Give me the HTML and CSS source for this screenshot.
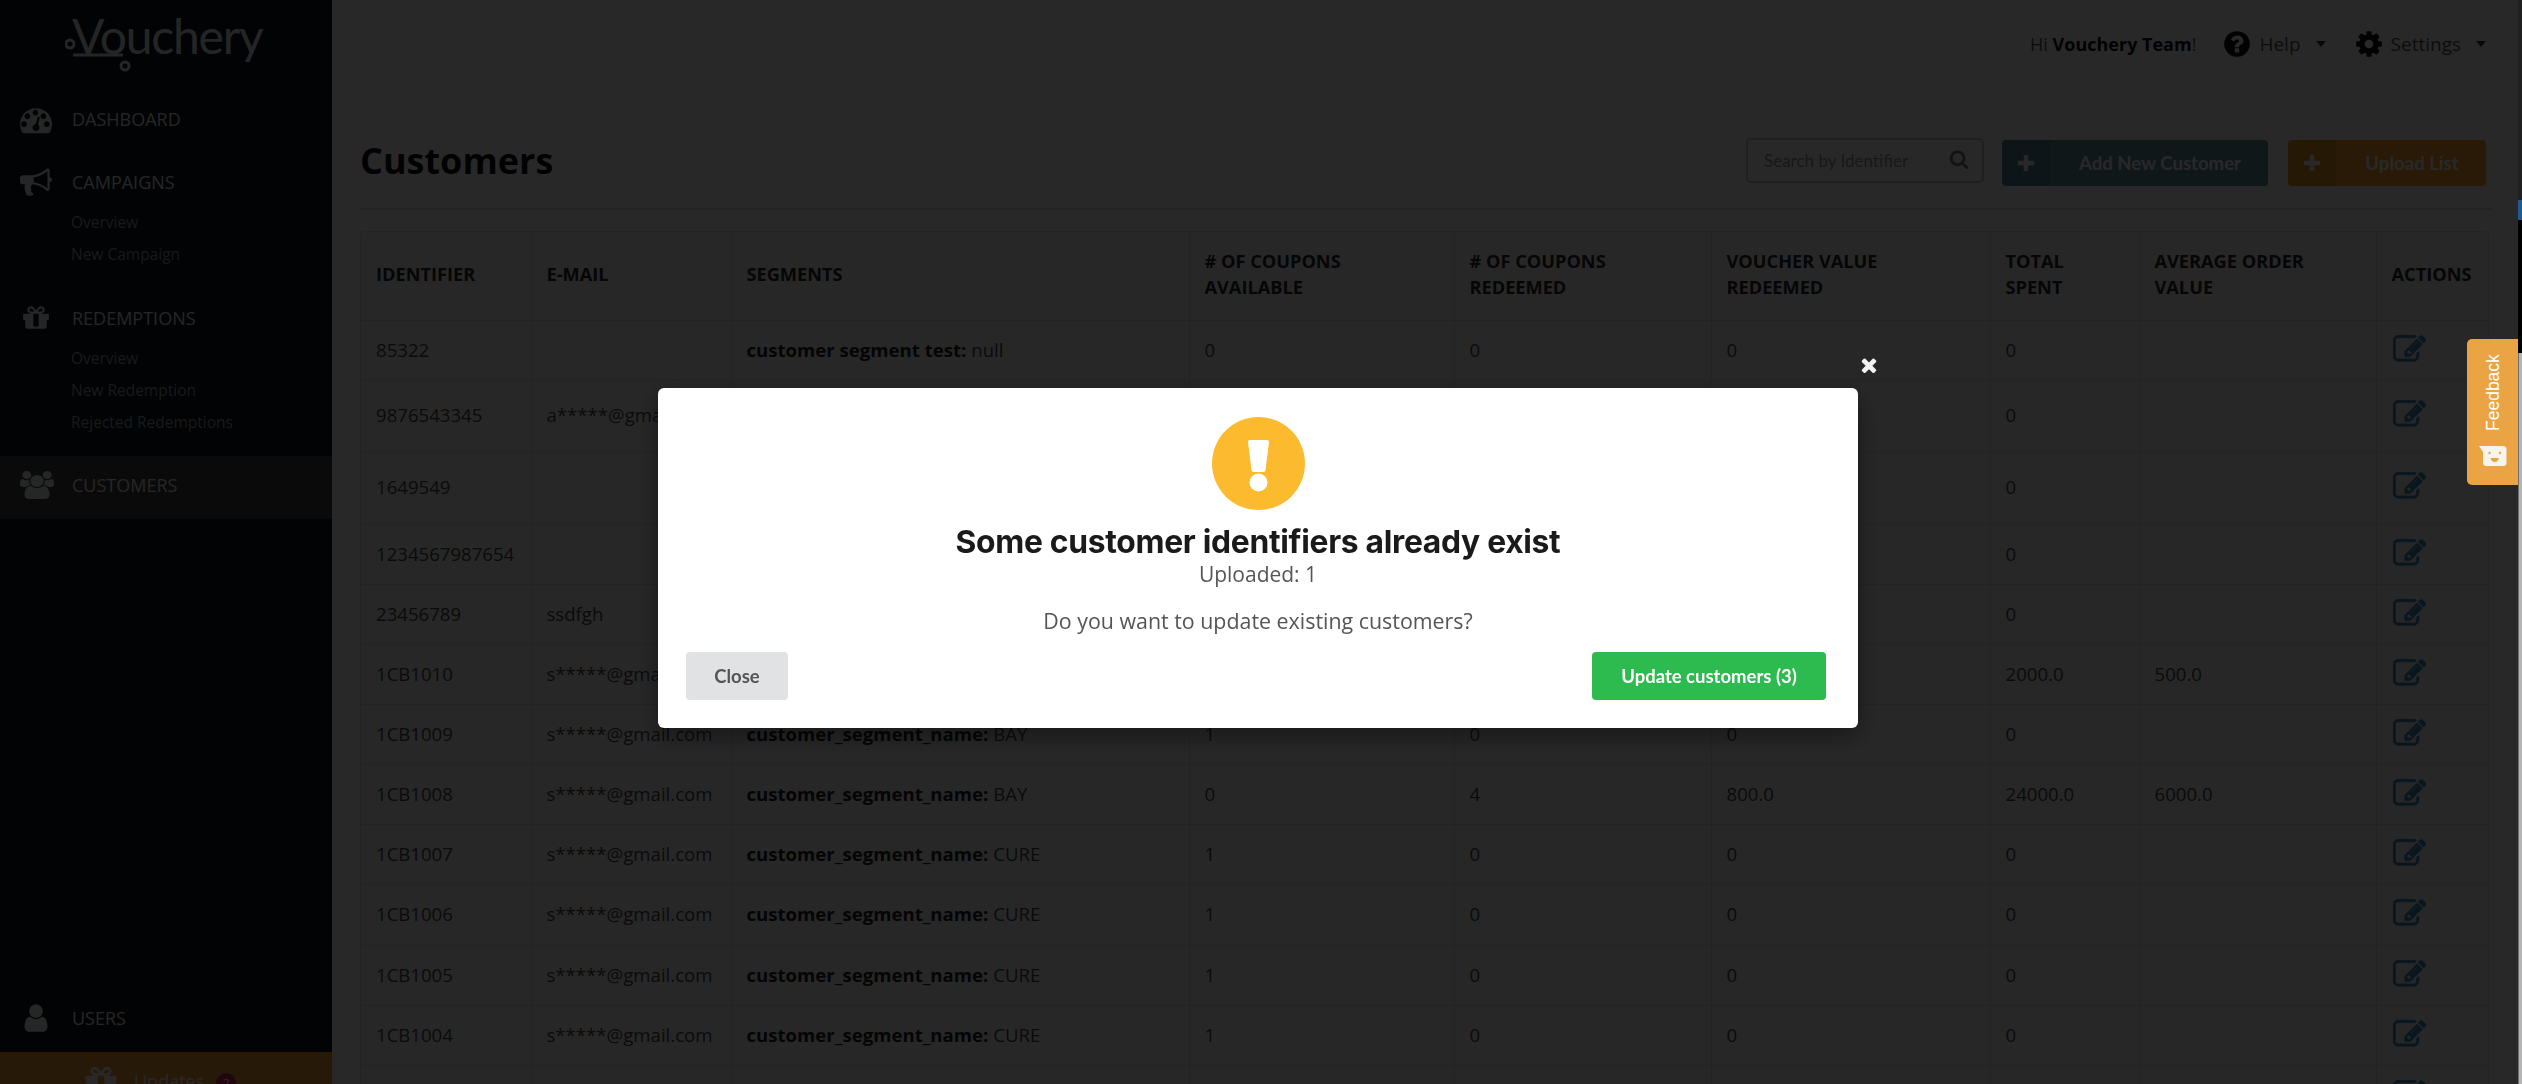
FILE: index.html
```html
<!DOCTYPE html>
<html lang="en">
<head>
<meta charset="utf-8">
<title>Customers - Vouchery</title>
<link rel="stylesheet" href="styles.css">
</head>
<body>
<svg class="sprites" width="0" height="0" aria-hidden="true">
  <symbol id="i-edit" viewBox="0 0 1792 1792"><path d="M888 1184l116-116-152-152-116 116v56h96v96h56zm440-720q-16-16-33 1l-350 350q-17 17-1 33t33-1l350-350q17-17 1-33zm80 594v190q0 119-84.5 203.5t-203.5 84.5h-832q-119 0-203.5-84.5t-84.5-203.5v-832q0-119 84.5-203.5t203.5-84.5h832q63 0 117 25 15 7 18 23 3 17-9 29l-49 49q-14 14-32 8-23-6-45-6h-832q-66 0-113 47t-47 113v832q0 66 47 113t113 47h832q66 0 113-47t47-113v-126q0-13 9-22l64-64q15-15 35-7t20 29zm-96-738l288 288-672 672h-288v-288zm444 132l-92 92-288-288 92-92q28-28 68-28t68 28l152 152q28 28 28 68t-28 68z"/></symbol>
  <symbol id="i-gift" viewBox="0 0 1792 1792"><path d="M1056 1356v-716h-320v716q0 25 18 38.5t46 13.5h192q28 0 46-13.5t18-38.5zm-456-844h195l-126-161q-26-31-69-31-40 0-68 28t-28 68 28 68 68 28zm688-96q0-40-28-68t-68-28q-43 0-69 31l-125 161h194q40 0 68-28t28-68zm376 256v320q0 14-9 23t-23 9h-96v416q0 40-28 68t-68 28h-1088q-40 0-68-28t-28-68v-416h-96q-14 0-23-9t-9-23v-320q0-14 9-23t23-9h440q-93 0-158.5-65.5t-65.5-158.5 65.5-158.5 158.5-65.5q107 0 168 77l128 165 128-165q61-77 168-77 93 0 158.5 65.5t65.5 158.5-65.5 158.5-158.5 65.5h440q14 0 23 9t9 23z"/></symbol>
  <symbol id="i-plus" viewBox="0 0 20 20"><path d="M7.5 1h5v6.500H19v5h-6.500V19h-5v-6.500H1v-5h6.500z"/></symbol>
</svg>

<div class="app">
  <aside class="sidebar">
    <div class="logo">
      <svg class="logo-mark" viewBox="0 0 70 39" aria-hidden="true">
        <circle cx="5" cy="11" r="4"/>
        <path d="M8 22h50"/>
        <circle cx="60" cy="33" r="4"/>
      </svg>
      <span class="logo-text">Vouchery</span>
    </div>
    <nav class="nav">
      <section class="nav-group nav-dash">
        <a class="nav-head"><svg class="nav-icon" viewBox="0 0 1792 1792"><path d="M384 1184q0-66-47-113t-113-47-113 47-47 113 47 113 113 47 113-47 47-113zm192-448q0-66-47-113t-113-47-113 47-47 113 47 113 113 47 113-47 47-113zm428 481l101-382q6-26-7.5-48.5t-38.5-29.5-48 6.5-30 39.5l-101 382q-60 5-107 43.5t-63 98.5q-20 77 20 146t117 89 146-20 89-117q16-60-6-117t-72-91zm660-33q0-66-47-113t-113-47-113 47-47 113 47 113 113 47 113-47 47-113zm-640-640q0-66-47-113t-113-47-113 47-47 113 47 113 113 47 113-47 47-113zm448 192q0-66-47-113t-113-47-113 47-47 113 47 113 113 47 113-47 47-113zm320 448q0 261-141 483-19 29-54 29h-1402q-35 0-54-29-141-221-141-483 0-182 71-348t191-286 286-191 348-71 348 71 286 191 191 286 71 348z"/></svg><span>DASHBOARD</span></a>
      </section>
      <section class="nav-group nav-camp">
        <a class="nav-head"><svg class="nav-icon" viewBox="0 0 1792 1792"><path d="M1664 640q53 0 90.500 37.500t37.500 90.500-37.500 90.500-90.500 37.500v384q0 52-38 90t-90 38q-417-347-812-380-58 19-91 66t-31 100.500 40 92.500q-20 33-23 65.500t6 58 33.500 55 48 50 61.500 50.500q-29 58-111.500 83t-168.500 11.500-132-55.500q-7-23-29.500-87.500t-32-94.500-23-89-15-101 3.500-98.500 22-110.500h-122q-66 0-113-47t-47-113v-192q0-66 47-113t113-47h480q435 0 896-384 52 0 90 38t38 90v384zm-128 604v-954q-394 302-768 343v270q377 42 768 341z"/></svg><span>CAMPAIGNS</span></a>
        <a class="nav-sub">Overview</a>
        <a class="nav-sub">New Campaign</a>
      </section>
      <section class="nav-group nav-red">
        <a class="nav-head"><svg class="nav-icon nav-icon-gift"><use href="#i-gift"/></svg><span>REDEMPTIONS</span></a>
        <a class="nav-sub">Overview</a>
        <a class="nav-sub">New Redemption</a>
        <a class="nav-sub">Rejected Redemptions</a>
      </section>
      <section class="nav-group nav-cust">
        <a class="nav-head"><svg class="nav-icon nav-icon-wide" viewBox="0 0 1920 1792" preserveAspectRatio="none"><path d="M593 896q-162 5-265 128h-134q-82 0-138-40.500t-56-118.500q0-353 124-353 6 0 43.500 21t97.500 42.500 119 21.500q67 0 133-23-5 37-5 66 0 139 81 256zm1071 637q0 120-73 189.500t-194 69.500h-874q-121 0-194-69.500t-73-189.500q0-53 3.500-103.500t14-109 26.500-108.500 43-97.500 62-81 85.500-53.500 111.500-20q10 0 43 21.500t73 48 107 48 135 21.500 135-21.500 107-48 73-48 43-21.500q61 0 111.500 20t85.500 53.500 62 81 43 97.500 26.500 108.500 14 109 3.500 103.500zm-1024-1277q0 106-75 181t-181 75-181-75-75-181 75-181 181-75 181 75 75 181zm704 384q0 159-112.500 271.500t-271.500 112.500-271.500-112.500-112.500-271.500 112.500-271.500 271.500-112.500 271.500 112.500 112.500 271.500zm576 225q0 78-56 118.500t-138 40.500h-134q-103-123-265-128 81-117 81-256 0-29-5-66 66 23 133 23 59 0 119-21.500t97.500-42.500 43.500-21q124 0 124 353zm-128-609q0 106-75 181t-181 75-181-75-75-181 75-181 181-75 181 75 75 181z"/></svg><span>CUSTOMERS</span></a>
      </section>
    </nav>
    <div class="side-foot">
      <a class="nav-head nav-users"><svg class="nav-icon" viewBox="0 0 1792 1792"><path d="M1536 1399q0 109-62.500 187t-150.500 78h-854q-88 0-150.500-78t-62.500-187q0-85 8.500-160.500t31.500-152 58.500-131 94-89 134.500-34.500q131 128 313 128t313-128q76 0 134.500 34.500t94 89 58.500 131 31.500 152 8.500 160.500zm-256-887q0 159-112.500 271.500t-271.500 112.500-271.500-112.500-112.500-271.500 112.500-271.500 271.500-112.500 271.500 112.500 112.500 271.500z"/></svg><span>USERS</span></a>
      <a class="updates"><svg class="updates-icon"><use href="#i-gift"/></svg><span>Updates</span><b class="updates-badge">2</b></a>
    </div>
  </aside>

  <main class="main">
    <header class="topbar">
      <span class="greet">Hi <b>Vouchery Team</b>!</span>
      <a class="top-link"><svg class="top-icon" viewBox="0 0 1792 1792"><path d="M1024 1376v-192q0-14-9-23t-23-9h-192q-14 0-23 9t-9 23v192q0 14 9 23t23 9h192q14 0 23-9t9-23zm256-672q0-88-55.500-163t-138.500-116-170-41q-243 0-371 213-15 24 8 42l132 100q7 6 19 6 16 0 25-12 53-68 86-92 34-24 86-24 48 0 85.500 26t37.500 59q0 38-20 61t-68 45q-63 28-115.500 86.500t-52.500 125.500v36q0 14 9 23t23 9h192q14 0 23-9t9-23q0-19 21.500-49.500t54.500-49.500q32-18 49-28.500t46-35 44.500-48 28-60.500 12.500-81zm384 192q0 209-103 385.500t-279.500 279.500-385.500 103-385.500-103-279.500-279.500-103-385.500 103-385.500 279.500-279.500 385.500-103 385.500 103 279.500 279.500 103 385.500z"/></svg><span>Help</span><i class="caret"></i></a>
      <a class="top-link"><svg class="top-icon" viewBox="0 0 1792 1792"><path d="M1152 896q0-106-75-181t-181-75-181 75-75 181 75 181 181 75 181-75 75-181zm512-109v222q0 12-8 23t-20 13l-185 28q-19 54-39 91 35 50 107 138 10 12 10 25t-9 23q-27 37-99 108t-94 71q-12 0-26-9l-138-108q-44 23-91 38-16 136-29 186-7 28-36 28h-222q-14 0-24.500-8.500t-11.500-21.500l-28-184q-49-16-90-37l-141 107q-10 9-25 9-14 0-25-11-126-114-165-168-7-10-7-23 0-12 8-23 15-21 51-66.500t54-70.500q-27-50-41-99l-183-27q-13-2-21-12.500t-8-23.500v-222q0-12 8-23t19-13l186-28q14-46 39-92-40-57-107-138-10-12-10-24 0-10 9-23 26-36 98.500-107.500t94.500-71.500q13 0 26 10l138 107q44-23 91-38 16-136 29-186 7-28 36-28h222q14 0 24.500 8.500t11.500 21.500l28 184q49 16 90 37l142-107q9-9 24-9 13 0 25 10 129 119 165 170 7 8 7 22 0 12-8 23-15 21-51 66.500t-54 70.500q26 50 41 98l183 28q13 2 21 12.500t8 23.500z"/></svg><span>Settings</span><i class="caret"></i></a>
    </header>

    <div class="page-head">
      <h1>Customers</h1>
      <div class="tools">
        <label class="search"><span>Search by Identifier</span><svg class="search-icon" viewBox="0 0 1792 1792"><path d="M1216 832q0-185-131.500-316.500t-316.500-131.500-316.500 131.500-131.500 316.500 131.500 316.500 316.500 131.500 316.500-131.500 131.500-316.500zm512 832q0 52-38 90t-90 38q-54 0-90-38l-343-342q-179 124-399 124-143 0-273.500-55.500t-225-150-150-225-55.500-273.500 55.500-273.500 150-225 225-150 273.500-55.500 273.500 55.500 225 150 150 225 55.500 273.500q0 220-124 399l343 343q37 37 37 90z"/></svg></label>
        <a class="act act-add"><i class="act-plus"><svg><use href="#i-plus"/></svg></i><span>Add New Customer</span></a>
        <a class="act act-up"><i class="act-plus"><svg><use href="#i-plus"/></svg></i><span>Upload List</span></a>
      </div>
    </div>

    <div class="table-wrap">
      <table class="grid">
        <colgroup>
          <col class="c1"><col class="c2"><col class="c3"><col class="c4"><col class="c5"><col class="c6"><col class="c7"><col class="c8"><col class="c9">
        </colgroup>
        <thead>
          <tr class="r-head"><th>IDENTIFIER</th><th>E-MAIL</th><th>SEGMENTS</th><th># OF COUPONS<br>AVAILABLE</th><th># OF COUPONS<br>REDEEMED</th><th>VOUCHER VALUE<br>REDEEMED</th><th>TOTAL<br>SPENT</th><th>AVERAGE ORDER<br>VALUE</th><th>ACTIONS</th></tr>
        </thead>
        <tbody>
          <tr class="r60"><td>85322</td><td></td><td><b>customer segment test:</b> null</td><td>0</td><td>0</td><td>0</td><td>0</td><td></td><td><svg class="edit"><use href="#i-edit"/></svg></td></tr>
          <tr class="r71"><td>9876543345</td><td>a*****@gmail.com</td><td></td><td>0</td><td>0</td><td>0</td><td>0</td><td></td><td><svg class="edit"><use href="#i-edit"/></svg></td></tr>
          <tr class="r73"><td>1649549</td><td></td><td></td><td>0</td><td>0</td><td>0</td><td>0</td><td></td><td><svg class="edit"><use href="#i-edit"/></svg></td></tr>
          <tr class="r60"><td>1234567987654</td><td></td><td></td><td>0</td><td>0</td><td>0</td><td>0</td><td></td><td><svg class="edit"><use href="#i-edit"/></svg></td></tr>
          <tr class="r60"><td>23456789</td><td>ssdfgh</td><td></td><td>0</td><td>0</td><td>0</td><td>0</td><td></td><td><svg class="edit"><use href="#i-edit"/></svg></td></tr>
          <tr class="r60"><td>1CB1010</td><td>s*****@gmail.com</td><td></td><td>0</td><td>0</td><td>0</td><td>2000.0</td><td>500.0</td><td><svg class="edit"><use href="#i-edit"/></svg></td></tr>
          <tr class="r60"><td>1CB1009</td><td>s*****@gmail.com</td><td><b>customer_segment_name:</b> BAY</td><td>1</td><td>0</td><td>0</td><td>0</td><td></td><td><svg class="edit"><use href="#i-edit"/></svg></td></tr>
          <tr class="r60"><td>1CB1008</td><td>s*****@gmail.com</td><td><b>customer_segment_name:</b> BAY</td><td>0</td><td>4</td><td>800.0</td><td>24000.0</td><td>6000.0</td><td><svg class="edit"><use href="#i-edit"/></svg></td></tr>
          <tr class="r60"><td>1CB1007</td><td>s*****@gmail.com</td><td><b>customer_segment_name:</b> CURE</td><td>1</td><td>0</td><td>0</td><td>0</td><td></td><td><svg class="edit"><use href="#i-edit"/></svg></td></tr>
          <tr class="r61"><td>1CB1006</td><td>s*****@gmail.com</td><td><b>customer_segment_name:</b> CURE</td><td>1</td><td>0</td><td>0</td><td>0</td><td></td><td><svg class="edit"><use href="#i-edit"/></svg></td></tr>
          <tr class="r60"><td>1CB1005</td><td>s*****@gmail.com</td><td><b>customer_segment_name:</b> CURE</td><td>1</td><td>0</td><td>0</td><td>0</td><td></td><td><svg class="edit"><use href="#i-edit"/></svg></td></tr>
          <tr class="r60"><td>1CB1004</td><td>s*****@gmail.com</td><td><b>customer_segment_name:</b> CURE</td><td>1</td><td>0</td><td>0</td><td>0</td><td></td><td><svg class="edit"><use href="#i-edit"/></svg></td></tr>
          <tr class="r60"><td></td><td></td><td></td><td></td><td></td><td></td><td></td><td></td><td><svg class="edit"><use href="#i-edit"/></svg></td></tr>
        </tbody>
      </table>
    </div>
  </main>
  <div class="scroll-strip"><i class="strip-top"></i><i class="strip-blue"></i><i class="strip-black"></i><i class="strip-grey"></i></div>
</div>

<div class="overlay"></div>

<a class="feedback">
  <span class="feedback-label">Feedback</span>
  <svg class="feedback-face" viewBox="0 0 28 20" aria-hidden="true">
    <path class="bubble" d="M0 0h24q3.500 0 3.500 3.500v13q0 3.500-3.500 3.500H7.500Q4 20 4 16.500V6z"/>
    <circle class="eye" cx="10.500" cy="7" r="1.200"/>
    <circle class="eye" cx="21" cy="7" r="1.200"/>
    <path class="eye" d="M11.500 12h8.500q-1 4-4.250 4t-4.250-4z"/>
  </svg>
</a>

<div class="modal-close"><svg viewBox="0 0 1792 1792"><path d="M1490 1322q0 40-28 68l-136 136q-28 28-68 28t-68-28l-294-294-294 294q-28 28-68 28t-68-28l-136-136q-28-28-28-68t28-68l294-294-294-294q-28-28-28-68t28-68l136-136q28-28 68-28t68 28l294 294 294-294q28-28 68-28t68 28l136 136q28 28 28 68t-28 68l-294 294 294 294q28 28 28 68z"/></svg></div>

<div class="modal" role="dialog">
  <div class="warn"><svg viewBox="0 0 93 93" aria-hidden="true"><path d="M38 23h17q2 0 2 2l-3.500 28q-.3 2-2 2h-10q-1.700 0-2-2L36 25q0-2 2-2z"/><circle cx="46.500" cy="65.500" r="9"/></svg></div>
  <h2>Some customer identifiers already exist</h2>
  <p class="uploaded">Uploaded: 1</p>
  <p class="question">Do you want to update existing customers?</p>
  <div class="modal-actions">
    <button class="btn btn-close">Close</button>
    <button class="btn btn-update">Update customers (3)</button>
  </div>
</div>
</body>
</html>
```

FILE: styles.css
```css
* { box-sizing: border-box; }
html, body { margin: 0; height: 100%; overflow: hidden; }
body { font-family: "Open Sans", "Liberation Sans", sans-serif; background: #fff; color: #4a4a4a; }
.sprites { position: absolute; }

.app { display: flex; width: 2522px; height: 1084px; }

/* sidebar */
.sidebar { width: 332px; flex: none; height: 1084px; background: #0d1419; display: flex; flex-direction: column; }
.logo { height: 87px; position: relative; padding: 8px 0 0 72px; }
.logo-text { font-family: Lato, sans-serif; font-weight: 400; font-size: 48px; line-height: 56px; letter-spacing: -1.200px; color: #e4e8e8; }
.logo-mark { position: absolute; left: 65px; top: 33px; width: 70px; height: 39px; fill: none; stroke: #e4e8e8; stroke-width: 3; }
.nav { flex: 1; display: flex; flex-direction: column; }
.nav-group { border-bottom: 1px solid #121a1f; }
.nav-dash { height: 66px; padding-top: 14px; }
.nav-camp { height: 136px; padding-top: 11px; }
.nav-red { height: 167px; padding-top: 11px; }
.nav-cust { height: 63px; padding-top: 11px; background: #444; border-bottom: 0; }
.nav-head { display: flex; align-items: center; height: 36px; padding-left: 20px; font-size: 18px; color: #e8eeee; }
.nav-icon { width: 32px; height: 32px; fill: #e8f2f2; flex: none; margin-right: 20px; }
.nav-icon-gift { width: 30px; height: 30px; margin: 0 21px 0 1px; }
.nav-icon-wide { width: 34px; height: 28px; margin-right: 18px; }
.nav-sub { display: block; height: 32px; line-height: 32px; padding-left: 71px; font-size: 15.500px; color: #9aa0a3; }
.nav-head + .nav-sub { margin-top: 6px; }
.side-foot { display: flex; flex-direction: column; }
.nav-users { height: 33px; margin-bottom: 18px; }
.updates { height: 32px; background: #f39f2e; color: #fff; display: flex; align-items: flex-start; padding: 17px 0 0 83px; font-size: 18px; overflow: hidden; }
.updates-icon { width: 36px; height: 36px; fill: #fff; margin: -6px 15px 0 0; flex: none; }
.updates-badge { width: 20px; height: 20px; border-radius: 50%; background: #d02060; font-weight: 400; font-size: 13px; text-align: center; line-height: 20px; margin-left: 12px; margin-top: 4px; }

/* main */
.main { flex: 1; min-width: 0; padding: 0 29px 0 28px; }
.topbar { height: 88px; display: flex; align-items: center; justify-content: flex-end; font-size: 18px; color: #555; padding-right: 7px; }
.greet { margin-right: 26px; color: #555; }
.greet b { color: #111; }
.top-link { display: flex; align-items: center; font-size: 19px; }
.top-link + .top-link { margin-left: 28px; }
.top-icon { width: 30px; height: 30px; fill: #111; margin-right: 7px; }
.caret { width: 0; height: 0; border: 5px solid transparent; border-top: 6px solid #333; border-bottom: 0; margin-left: 15px; }

.page-head { height: 122px; display: flex; justify-content: space-between; padding-top: 50px; border-bottom: 2px solid #ddd; margin-bottom: 21px; }
h1 { margin: 0; font-size: 36px; line-height: 46px; font-weight: 700; color: #111; }
.tools { display: flex; align-items: flex-start; margin-right: 7px; }
.search { width: 238px; height: 45px; border: 2px solid #c4c4c4; border-radius: 5px; display: flex; align-items: center; justify-content: space-between; padding: 0 13px 0 16px; font-size: 17px; color: #999; font-family: Lato, sans-serif; }
.search-icon { width: 20px; height: 20px; fill: #777; margin-top: -4px; }
.act { height: 46px; margin: 2px 0 0 18px; border-radius: 4px; display: flex; color: #fff; font-size: 18.600px; font-weight: 700; overflow: hidden; font-family: Lato, sans-serif; }
.act-add { width: 266px; background: #5e93a2; margin-left: 18px; }
.act-up { width: 198px; background: #ffa726; margin-left: 20px; }
.act span { flex: 1; display: flex; align-items: center; justify-content: center; padding-left: 2px; }
.act-plus { width: 48px; height: 46px; display: flex; align-items: center; justify-content: center; background: rgba(0,0,0,.07); }
.act-plus svg { width: 18px; height: 18px; fill: #fff; }

.table-wrap { width: 2129px; border: 1px solid #dedede; border-radius: 4px 4px 0 0; }
.grid { border-collapse: collapse; table-layout: fixed; width: 2127px; background: #f7f7f7; font-size: 18.600px; }
.c1 { width: 170px; } .c2 { width: 200px; } .c3 { width: 458px; } .c4 { width: 265px; } .c5 { width: 257px; } .c6 { width: 279px; } .c7 { width: 149px; } .c8 { width: 237px; } .c9 { width: 112px; }
.grid th, .grid td { border: 1px solid #e0e0e0; padding: 0 0 2px 15px; text-align: left; vertical-align: middle; white-space: nowrap; }
.grid tr > :first-child { border-left: 0; }
.grid tr > :last-child { border-right: 0; }
.grid thead tr:first-child th { border-top: 0; }
.grid th { font-weight: 700; font-size: 18.200px; line-height: 26px; color: #2a2a2a; padding-bottom: 4px; }
.grid td { color: #4a4a4a; }
.grid td b { color: #222; }
.r-head { height: 88px; }
.r60 { height: 60px; } .r61 { height: 61px; } .r71 { height: 71px; } .r73 { height: 73px; }
.edit { width: 33px; height: 33px; fill: #3a8cc0; stroke: #3a8cc0; stroke-width: 36; display: block; margin-left: 1px; }

.scroll-strip { position: fixed; right: 0; top: 0; width: 4px; height: 1084px; z-index: 20; display: flex; flex-direction: column; }
.strip-top { height: 200px; background: #202020; }
.strip-blue { height: 20px; background: #1d5a96; }
.strip-black { height: 133px; background: #000; }
.strip-grey { flex: 1; background: #b5b5b5; border-left: 1px solid #6e6e6e; }

/* overlay, modal */
.overlay { position: fixed; inset: 0; background: rgba(0,0,0,.843); z-index: 10; }
.modal { position: fixed; left: 658px; top: 388px; width: 1200px; height: 340px; background: #fff; border-radius: 6px; z-index: 12; box-shadow: 0 8px 24px rgba(0,0,0,.4); text-align: center; padding-top: 29px; }
.warn { width: 93px; height: 93px; border-radius: 50%; background: #fcbb2f; margin: 0 auto; }
.warn svg { width: 93px; height: 93px; fill: #fff; display: block; }
.modal h2 { margin: 12px 0 0; font-family: Inter, Lato, sans-serif; font-size: 31.800px; line-height: 40px; font-weight: 700; letter-spacing: -.3px; color: #1a1a1a; }
.uploaded { margin: -2px 0 0; font-size: 21px; line-height: 28px; color: #555; }
.question { margin: 19px 0 0; font-size: 21.400px; line-height: 28px; color: #555; }
.modal-actions { display: flex; justify-content: space-between; margin: 17px 32px 0 28px; }
.btn { height: 48px; border: 0; border-radius: 4px; font-family: Lato, sans-serif; font-weight: 700; font-size: 18.500px; padding: 0; }
.btn-close { width: 102px; background: #e1e2e4; color: #555; }
.btn-update { width: 234px; background: #2dba4e; color: #fff; }

.modal-close { position: fixed; left: 1858px; top: 354px; width: 22px; height: 22px; z-index: 12; }
.modal-close svg { width: 22px; height: 22px; fill: #f2f2f2; display: block; }

/* feedback */
.feedback { position: fixed; right: 4px; top: 339px; width: 51px; height: 146px; background: #eba444; border-radius: 5px 0 0 5px; z-index: 12; display: flex; flex-direction: column; align-items: center; padding-top: 16px; color: #fff; }
.feedback-label { writing-mode: vertical-rl; transform: rotate(180deg); font-family: "Liberation Sans", Arial, sans-serif; font-size: 17.500px; line-height: 20px; height: 76px; }
.feedback-face { width: 28px; height: 20px; margin-top: 15px; }
.bubble { fill: #f7f4ee; }
.eye { fill: #eba444; }
```
